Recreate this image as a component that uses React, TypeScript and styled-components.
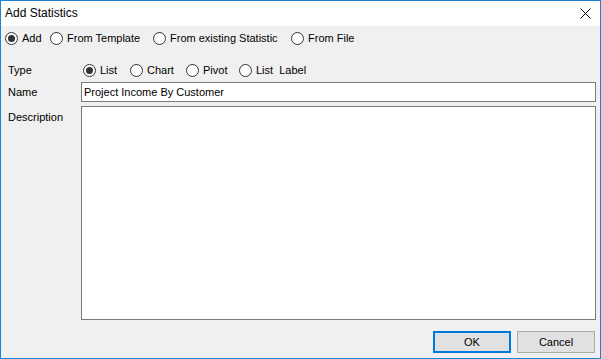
import React from 'react'
import styled, { createGlobalStyle } from 'styled-components'

const GlobalStyle = createGlobalStyle`
    html, body {
        margin: 0;
        padding: 0;
        background: #ffffff;
    }
    * {
        box-sizing: border-box;
    }
`

interface Option {
    label: string
    width?: number
    checked?: boolean
}

const sourceOptions: Option[] = [
    { label: 'Add', width: 45, checked: true },
    { label: 'From Template', width: 103 },
    { label: 'From existing Statistic', width: 138 },
    { label: 'From File' },
]

const typeOptions: Option[] = [
    { label: 'List', width: 47, checked: true },
    { label: 'Chart', width: 56 },
    { label: 'Pivot', width: 53 },
    { label: 'List  Label' },
]

const RadioGroup = ({ options }: { options: Option[] }) => (
    <RadioRow>
        {options.map((o) => (
            <RadioOption key={o.label} width={o.width}>
                <RadioCircle>{o.checked && <RadioDot />}</RadioCircle>
                <RadioText>{o.label}</RadioText>
            </RadioOption>
        ))}
    </RadioRow>
)

export default () => {
    return (
        <>
            <GlobalStyle />
            <Window>
                <TitleBar>
                    <Title>Add Statistics</Title>
                    <CloseButton>
                        <svg width="11" height="11" viewBox="0 0 11 11">
                            <path d="M0.5 0.5 L10.5 10.5 M10.5 0.5 L0.5 10.5" stroke="#000" strokeWidth="1" fill="none" />
                        </svg>
                    </CloseButton>
                </TitleBar>
                <Body>
                    <SourceRow>
                        <RadioGroup options={sourceOptions} />
                    </SourceRow>
                    <Form>
                        <Label>Type</Label>
                        <TypeCell>
                            <RadioGroup options={typeOptions} />
                        </TypeCell>
                        <Label>Name</Label>
                        <TextInput defaultValue="Project Income By Customer" />
                        <TopLabel>Description</TopLabel>
                        <TextArea />
                    </Form>
                    <ButtonBar>
                        <Button primary>OK</Button>
                        <Button>Cancel</Button>
                    </ButtonBar>
                </Body>
            </Window>
        </>
    )
}

const Window = styled.div`
    width: 601px;
    height: 359px;
    border: 1px solid #1883d7;
    background: #f0f0f0;
    display: flex;
    flex-direction: column;
    font-family: "Liberation Sans", Arial, sans-serif;
    font-size: 11px;
    color: #000;
`

const TitleBar = styled.div`
    height: 25px;
    background: #ffffff;
    display: flex;
    align-items: center;
    justify-content: space-between;
    padding: 0 9px 1px 4px;
`

const Title = styled.div`
    font-size: 12px;
    color: #000;
`

const CloseButton = styled.div`
    display: flex;
    align-items: center;
    height: 11px;
`

const Body = styled.div`
    flex: 1;
    display: flex;
    flex-direction: column;
    padding: 2px 5px 5px 4px;
`

const SourceRow = styled.div`
    height: 20px;
    display: flex;
    align-items: center;
`

const RadioRow = styled.div`
    display: flex;
    align-items: center;
`

const RadioOption = styled.div<{ width?: number }>`
    display: flex;
    align-items: center;
    gap: 4px;
    width: ${props => (props.width ? `${props.width}px` : 'auto')};
    flex-shrink: 0;
    white-space: pre;
`

const RadioCircle = styled.span`
    width: 13px;
    height: 13px;
    border: 1px solid #333333;
    border-radius: 50%;
    background: #ffffff;
    display: flex;
    align-items: center;
    justify-content: center;
`

const RadioDot = styled.span`
    width: 7px;
    height: 7px;
    border-radius: 50%;
    background: #333333;
`

const RadioText = styled.span`
    line-height: 13px;
`

const Form = styled.div`
    flex: 1;
    display: grid;
    grid-template-columns: 73px 1fr;
    grid-template-rows: 20px 20px 1fr;
    row-gap: 2px;
    margin-top: 12px;
    padding-left: 3px;
`

const Label = styled.div`
    display: flex;
    align-items: center;
`

const TopLabel = styled.div`
    padding-top: 5px;
    margin-top: 2px;
`

const TypeCell = styled.div`
    display: flex;
    align-items: center;
    padding-left: 2px;
`

const TextInput = styled.input`
    height: 20px;
    border: 1px solid #7a7a7a;
    background: #ffffff;
    padding: 0 2px;
    font-family: inherit;
    font-size: 11px;
    color: #000;
    outline: none;
    margin-right: -1px;
`

const TextArea = styled.textarea`
    height: 214px;
    margin-top: 2px;
    margin-right: -1px;
    border: 1px solid #7a7a7a;
    background: #ffffff;
    resize: none;
    outline: none;
    font-family: inherit;
    font-size: 11px;
`

const ButtonBar = styled.div`
    display: flex;
    justify-content: flex-end;
    gap: 6px;
    margin-top: 11px;
`

const Button = styled.button<{ primary?: boolean }>`
    width: 78px;
    height: 22px;
    background: #e1e1e1;
    border: ${props => (props.primary ? '2px solid #0078d7' : '1px solid #adadad')};
    font-family: inherit;
    font-size: 11px;
    color: #000;
    padding: 0;
`
